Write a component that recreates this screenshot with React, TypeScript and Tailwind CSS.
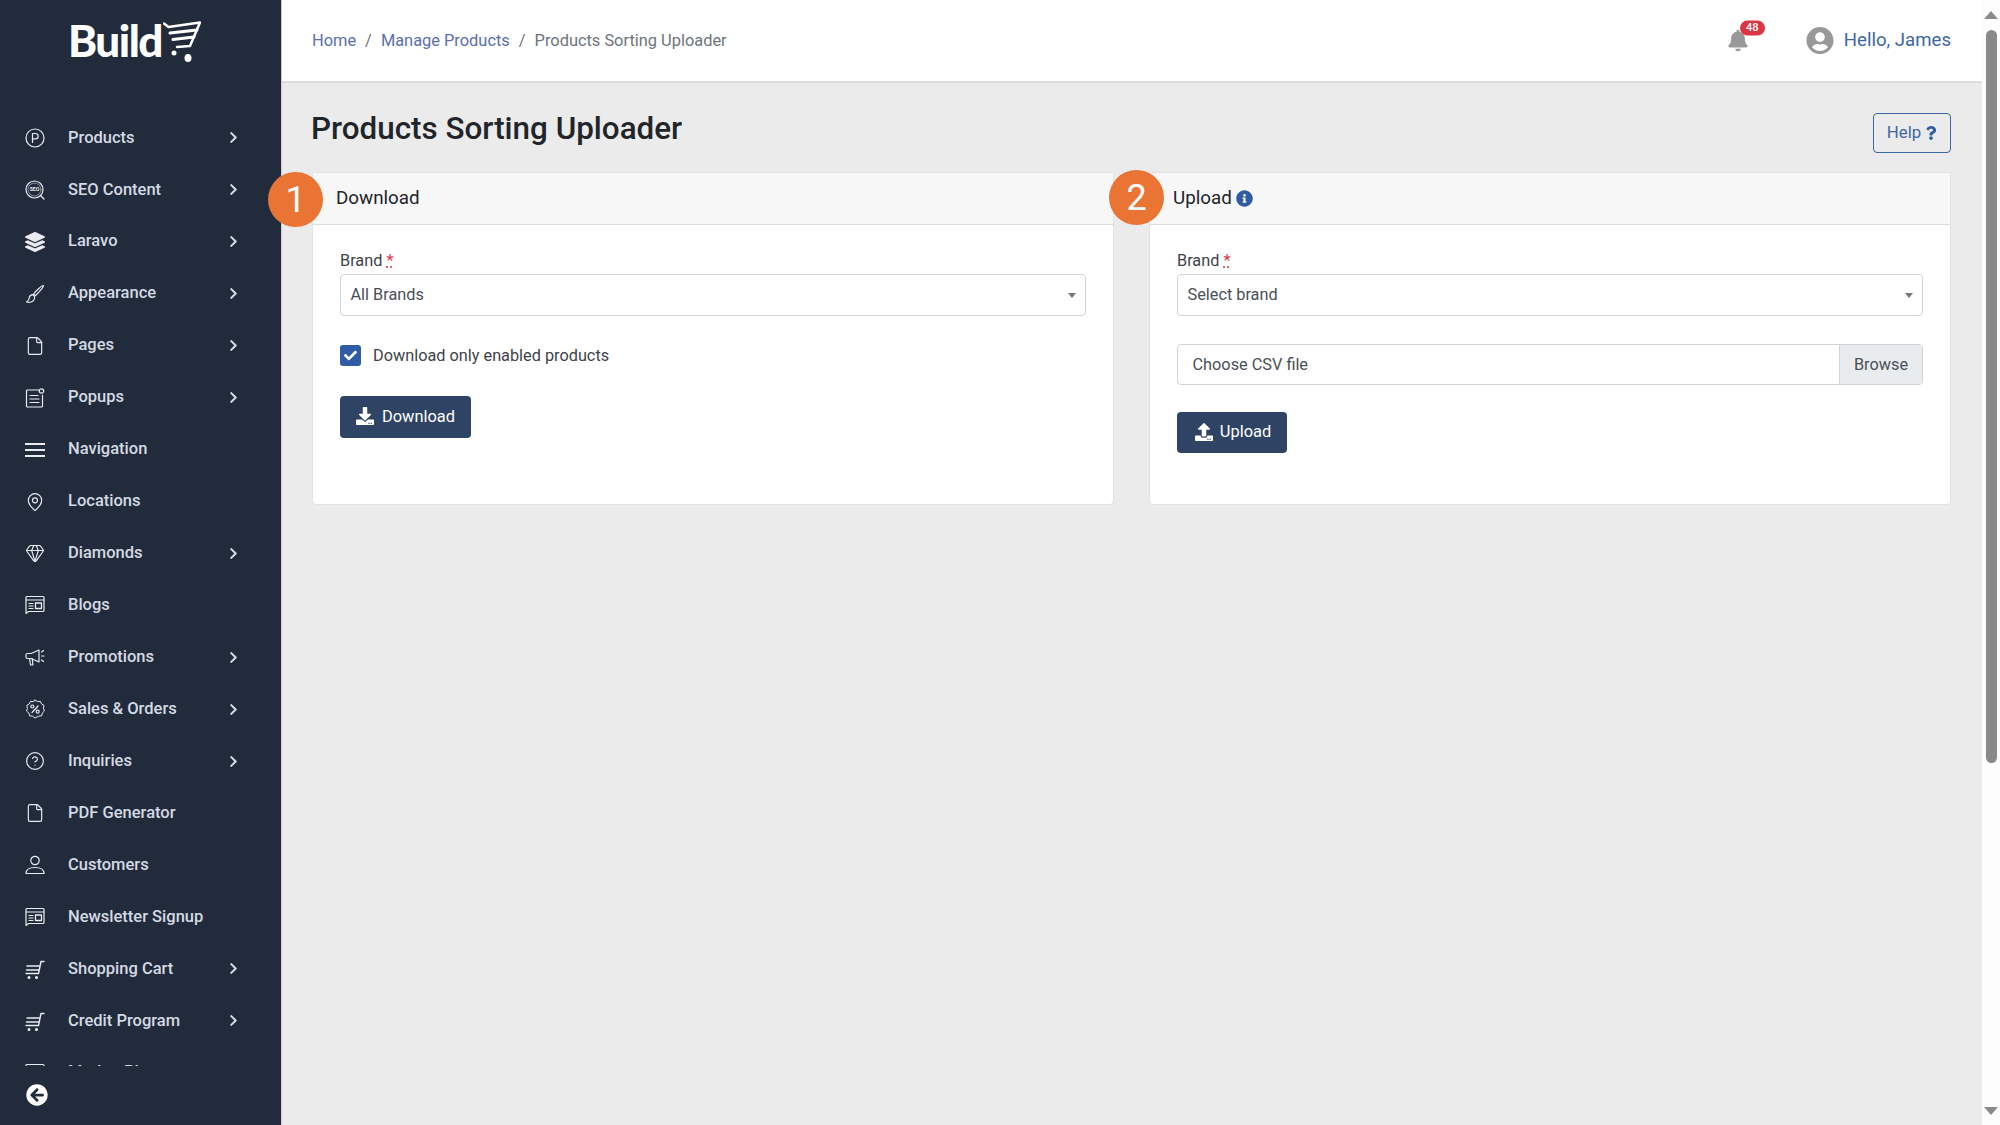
import React from "react";
import { FaBell, FaCheck, FaChevronRight, FaArrowCircleLeft, FaDownload, FaUpload, FaInfoCircle, FaQuestion, FaLayerGroup, FaUserCircle } from "react-icons/fa";
import { File, Gem, CircleHelp, MapPin } from "lucide-react";

const S = ({ children }: { children: React.ReactNode }) => (
  <svg viewBox="0 0 20 20" width="20" height="20" fill="none" stroke="currentColor" strokeWidth="1.2" strokeLinecap="round" strokeLinejoin="round">{children}</svg>
);
const L = { size: 20, strokeWidth: 1.4 };
const Cart = () => <S><path d="M2 7h12M1.500 11h12M1 14.500h12.500L16 2.500h3" strokeWidth="1.4" /><circle cx="4" cy="18.500" r=".9" fill="currentColor" /><circle cx="11.500" cy="18.500" r=".9" fill="currentColor" /></S>;
const Blog = () => <S><path d="M1 18.500V2.500a1 1 0 0 1 1-1h16a1 1 0 0 1 1 1v13a1 1 0 0 1-1 1H3.500z" /><path d="M1 5h18" /><path d="M4 8.500h4M4 11h4M4 13.500h4" strokeWidth="1.2" /><rect x="10.500" y="8" width="6" height="5.500" strokeWidth="1.300" /></S>;

const items: [string, React.ReactNode, boolean][] = [
  ["Products", <S><circle cx="10" cy="10" r="9" /><path d="M7.500 14.500v-9h3a2.700 2.700 0 0 1 0 5.400h-3" /></S>, true],
  ["SEO Content", <S><circle cx="9.500" cy="9.500" r="8.500" /><circle cx="9.500" cy="9.500" r="6.500" strokeWidth=".5" /><text x="9.500" y="11.400" textAnchor="middle" fontSize="5.200" fontWeight="700" fill="currentColor" stroke="none" fontFamily="Roboto, sans-serif">SEO</text><path d="M15.500 15.500l3.500 3.500" /></S>, true],
  ["Laravo", <FaLayerGroup size={20} />, true],
  ["Appearance", <S><path d="M18.500 1.500c-1.300-.4-7.700 5.400-10 8.500l1.700 1.700c3-2.300 8.700-8.900 8.300-10.200z" /><path d="M7.800 10.700c-2.500.2-3.300 1.600-3.500 3-.2 1.700-1 3-2.800 4.300 3.500.9 7.500-.3 8.200-4 .2-1.100-.4-2.500-1.900-3.300z" /></S>, true],
  ["Pages", <File {...L} />, true],
  ["Popups", <S><path d="M14 2H2.500a1 1 0 0 0-1 1v15a1 1 0 0 0 1 1h14a1 1 0 0 0 1-1V7" /><path d="M5 7.500h8M5 11h9M5 14.500h9" /><circle cx="16.500" cy="3" r="2.200" /></S>, true],
  ["Navigation", <svg width="20" height="20" viewBox="0 0 20 20" fill="currentColor"><rect y="3" width="20" height="2" /><rect y="9" width="20" height="2" /><rect y="15" width="20" height="2" /></svg>, false],
  ["Locations", <MapPin {...L} />, false],
  ["Diamonds", <Gem {...L} />, true],
  ["Blogs", <Blog />, false],
  ["Promotions", <S><path d="M14 3L6 6.500H2.500A1.500 1.500 0 0 0 1 8v2a1.500 1.500 0 0 0 1.500 1.500H6L14 15zM4.500 11.500l1 6.500h2.300l-.5-6.500" /><path d="M16.500 5l2-1.500M16.500 9H19M16.500 13l2 1.500" /></S>, true],
  ["Sales & Orders", <S><path d="M10 1l2.400 1.600 2.900-.3 1.200 2.600 2.500 1.500-.6 2.800 1 2.800-2.100 2-.6 2.800-2.900.3L10 19l-2.400-1.800-2.900-.3-.8-2.800L1.500 12l.9-2.800-.6-2.800 2.500-1.500 1.200-2.600 2.900.3z" strokeWidth="1" /><path d="M13 7l-6 6.500" /><circle cx="7.300" cy="7.500" r="1.500" /><circle cx="12.700" cy="12.700" r="1.500" /></S>, true],
  ["Inquiries", <CircleHelp {...L} />, true],
  ["PDF Generator", <File {...L} />, false],
  ["Customers", <S><circle cx="10" cy="5.500" r="4.200" /><path d="M1 18.500c0-4 3.500-6 9-6s9 2 9 6z" /></S>, false],
  ["Newsletter Signup", <Blog />, false],
  ["Shopping Cart", <Cart />, true],
  ["Credit Program", <Cart />, true],
  ["Market Place", <Blog />, true],
];

function NavRow({ label, icon, more }: { label: string; icon: React.ReactNode; more: boolean }) {
  return (
    <div className="flex h-[51.95px] shrink-0 items-center pl-[25px] text-[#d3dae3]">
      <span className="flex w-[43px] shrink-0 text-[#e8ecf1]">{icon}</span>
      <span className="flex-1 text-[16.500px] font-medium">{label}</span>
      {more && <FaChevronRight size={13} className="mr-[41px] text-[#d3dae3]" />}
    </div>
  );
}

function Sidebar() {
  return (
    <aside className="relative flex h-full w-[282px] shrink-0 flex-col border-r border-[#c9ccd1] bg-[#222b3c]">
      <div className="flex h-[112px] shrink-0 items-start pl-[68px] pt-[13px] text-white">
        <span className="font-['Lato'] text-[44px] font-black leading-[55px] tracking-[-1.500px]">Build</span>
        <svg className="ml-[1px] mt-[8px]" width="38" height="42" viewBox="0 0 38 42" fill="none" stroke="white" strokeLinecap="round" strokeLinejoin="round">
          <path d="M1 2.500l4.500 3.500L37 1.500 27 25 14 26" strokeWidth="2.500" />
          <path d="M7 12l27-3M10 18.500l21-2.500" strokeWidth="3" />
          <circle cx="11" cy="32" r="2.500" fill="white" stroke="none" />
          <ellipse cx="25" cy="37" rx="3.500" ry="4" fill="white" stroke="none" />
        </svg>
      </div>
      <nav className="h-[954px] shrink-0 overflow-hidden">
        {items.map(([l, i, m]) => <NavRow key={l} label={l} icon={i} more={m} />)}
      </nav>
      <div className="pl-[26px] pt-[18px] text-white"><FaArrowCircleLeft size={22} /></div>
    </aside>
  );
}

function Req() {
  return <>Brand <span className="text-[#dc3545] underline decoration-dotted">*</span></>;
}

function Select({ text }: { text: string }) {
  return (
    <div className="flex h-[42px] items-center justify-between rounded border border-[#ced4da] bg-white pl-[9.500px] pr-[9px] text-[16.300px] text-[#495057]">
      <span>{text}</span>
      <span className="h-0 w-0 border-x-[4px] border-t-[5px] border-x-transparent border-t-[#777]" />
    </div>
  );
}

function Card({ title, n, offset, children, info }: { title: string; n: string; offset: string; children: React.ReactNode; info?: boolean }) {
  return (
    <section className="relative h-[333px] rounded border border-[#e2e2e2] bg-white">
      <span className={`absolute z-10 flex h-[55px] w-[55px] items-center justify-center rounded-full bg-[#ea7433] text-[36px] text-white ${offset}`}>{n}</span>
      <header className="flex h-[52px] items-center gap-[4px] border-b border-[#dedede] bg-[#f7f7f7] pb-[1px] pl-[23px] text-[18.800px] text-[#212529]">
        {title}
        {info && <FaInfoCircle size={17} className="text-[#2f5ca5]" />}
      </header>
      <div className="px-[27px] pt-[25px]">{children}</div>
    </section>
  );
}

export default function App() {
  return (
    <div className="flex h-screen w-full overflow-hidden bg-[#ebebeb] font-['Roboto',sans-serif]">
      <Sidebar />
      <main className="flex min-w-0 flex-1 flex-col">
        <div className="flex h-[83px] shrink-0 items-center justify-between border-b-2 border-[#dcdcdc] bg-white pl-[30px] pr-[31px] pt-[1px] text-[16.400px]">
          <div className="flex items-center gap-[9px] text-[#6c757d]">
            <span className="text-[#5a6fb0]">Home</span><span>/</span>
            <span className="text-[#5a6fb0]">Manage Products</span><span>/</span>
            <span>Products Sorting Uploader</span>
          </div>
          <div className="flex -translate-y-[0.5px] items-center">
            <div className="relative mr-[57px] text-[#999]">
              <FaBell size={22} />
              <span className="absolute -top-[9px] left-[13px] flex h-[15px] w-[25px] items-center justify-center rounded-full bg-[#dc3545] text-[11px] font-medium text-white">48</span>
            </div>
            <FaUserCircle size={28} className="mr-[10px] text-[#999]" />
            <span className="text-[18.600px] text-[#3d67a6]">Hello, James</span>
          </div>
        </div>
        <div className="pl-[30px] pr-[31px]">
          <div className="flex h-[89px] items-start justify-between pt-[25px]">
            <h1 className="-ml-[1px] text-[31.400px] font-medium leading-[42px] text-[#212529]">Products Sorting Uploader</h1>
            <button className="mt-[5px] flex h-[40px] w-[78px] items-center justify-center gap-[3px] rounded border-[1.500px] border-[#3d67a6] pl-[1px] text-[16.800px] text-[#3d67a6]">
              Help <FaQuestion size={14} className="text-[#2f5ca5]" />
            </button>
          </div>
          <div className="grid grid-cols-2 gap-[35px]">
            <Card title="Download" n="1" offset="-left-[45px] -top-[1px]">
              <div className="mb-[2px] text-[16.300px] leading-[22px] text-[#3d4349]"><Req /></div>
              <Select text="All Brands" />
              <div className="mt-[28px] flex items-center gap-[12px] text-[16.300px] text-[#3d4349]">
                <span className="flex h-[21px] w-[21px] -translate-y-[1px] items-center justify-center rounded-[3px] bg-[#2f5ca5] text-white"><FaCheck size={13} /></span>
                Download only enabled products
              </div>
              <button className="mt-[28px] flex h-[42px] w-[131px] items-center justify-center gap-[8px] rounded bg-[#2f4464] text-[16.400px] text-white">
                <FaDownload size={18} className="-translate-y-[1px]" /> Download
              </button>
            </Card>
            <Card title="Upload" n="2" offset="-left-[41px] -top-[3px]" info>
              <div className="mb-[2px] text-[16.300px] leading-[22px] text-[#3d4349]"><Req /></div>
              <Select text="Select brand" />
              <div className="mt-[28px] flex h-[41px] overflow-hidden rounded border border-[#ced4da] text-[16.300px] text-[#495057]">
                <span className="flex flex-1 items-center pl-[14.500px] pt-[1px]">Choose CSV file</span>
                <span className="flex w-[83px] items-center justify-center border-l border-[#ced4da] bg-[#e9ecef] pt-[1px]">Browse</span>
              </div>
              <button className="mt-[27px] flex h-[41px] w-[110px] items-center justify-center gap-[7px] rounded bg-[#2f4464] pl-[2px] text-[16.400px] text-white">
                <FaUpload size={18} className="-translate-y-[1px]" /> Upload
              </button>
            </Card>
          </div>
        </div>
      </main>
      <div className="flex w-[18px] shrink-0 flex-col items-center bg-[#fdfdfd] pb-[10px] pt-[11px]">
        <span className="h-0 w-0 border-x-[7px] border-b-[8px] border-x-transparent border-b-[#8a8a8a]" />
        <span className="mt-[11px] h-[733px] w-[11px] rounded-full bg-[#8a8a8a]" />
        <span className="mt-auto h-0 w-0 border-x-[7px] border-t-[8px] border-x-transparent border-t-[#8a8a8a]" />
      </div>
    </div>
  );
}
